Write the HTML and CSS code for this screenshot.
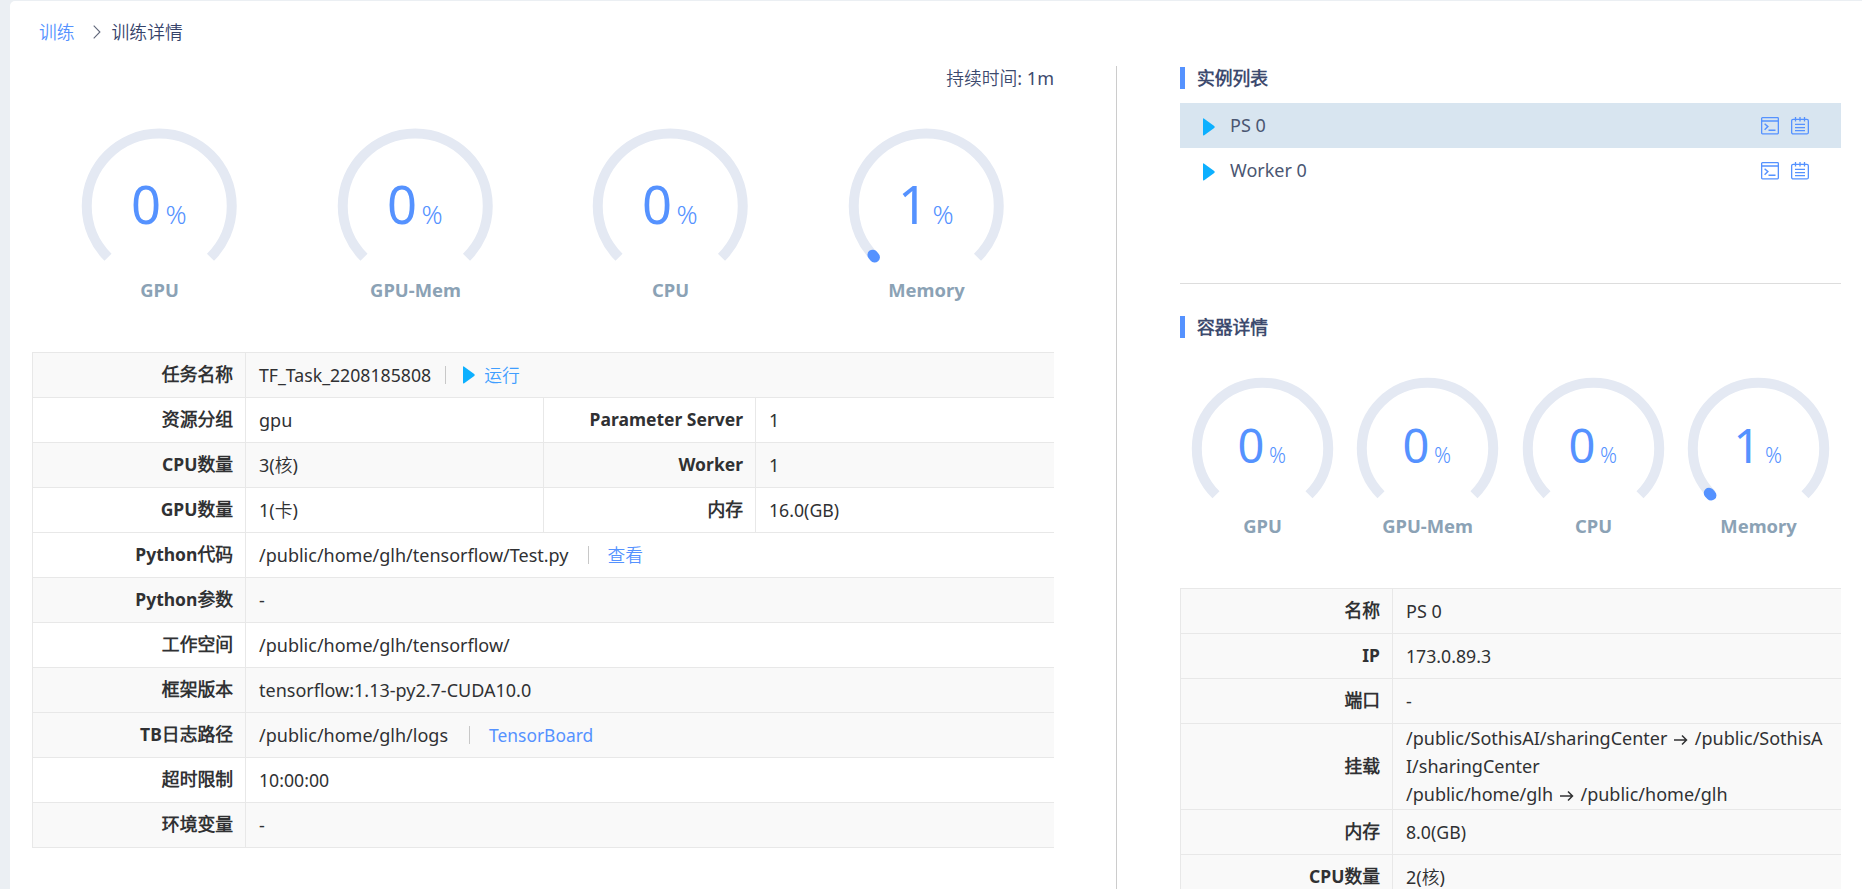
FILE: index.html
```html
<!DOCTYPE html>
<html lang="zh-CN">
<head>
<meta charset="utf-8">
<title>训练详情</title>
<link rel="stylesheet" href="styles.css">
</head>
<body>
<svg class="defs" width="0" height="0" aria-hidden="true">
  <symbol id="play" viewBox="0 0 12 18"><path d="M0 1.2Q0-.3 1.2.8L11.2 8q1 1 0 2L1.2 17.2Q0 18.200 0 16.800Z" fill="#0db0ff"/></symbol>
  <symbol id="term" viewBox="0 0 18 18"><g fill="none" stroke="#5592ff" stroke-width="1.300"><rect x=".65" y=".65" width="16.700" height="16.200" rx=".8"/><path d="M.6 4h16.800"/><path d="M3.600 6.800 6.900 9.600 3.600 12.800M7.500 13.200h7" stroke-width="1.400"/></g></symbol>
  <symbol id="note" viewBox="0 0 18 18"><g fill="none" stroke="#5592ff" stroke-width="1.300"><rect x=".65" y="2.300" width="16.700" height="14.600" rx="1.500"/><path d="M4.500 0v4.500M9 0v4.500M13.500 0v4.500M4 7.400h10M4 10.600h10M4 13.700h10"/></g></symbol>
  <symbol id="ring" viewBox="0 0 256 190"><path d="M76 142.300A72.500 72.500 0 1 1 178.500 142.300" fill="none" stroke="#e4e9f3" stroke-width="10"/></symbol>
  <symbol id="ring-s" viewBox="0 0 166 180"><path d="M36 134.800A65.700 65.700 0 1 1 129 134.800" fill="none" stroke="#e4e9f3" stroke-width="10"/></symbol>
</svg>
<div class="page">
  <nav class="crumbs">
    <a class="link">训练</a>
    <svg class="chev" width="8" height="14" viewBox="0 0 8 14"><path d="M.7.7 6.900 7 .7 13.300" fill="none" stroke="#60677a" stroke-width="1.100"/></svg>
    <span>训练详情</span>
  </nav>
  <div class="columns">
    <section class="left">
      <div class="duration">持续时间<span class="en">: 1m</span></div>
      <div class="gauges">
        <svg class="gauge" viewBox="0 0 255.500 190"><use href="#ring" width="256" height="190"/><text class="num" x="99" y="109">0</text><text class="pct" x="133.500" y="109">%</text><text class="name" x="127.500" y="182">GPU</text></svg>
        <svg class="gauge" viewBox="0 0 255.500 190"><use href="#ring" width="256" height="190"/><text class="num" x="99" y="109">0</text><text class="pct" x="133.500" y="109">%</text><text class="name" x="127.500" y="182">GPU-Mem</text></svg>
        <svg class="gauge" viewBox="0 0 255.500 190"><use href="#ring" width="256" height="190"/><text class="num" x="99" y="109">0</text><text class="pct" x="133.500" y="109">%</text><text class="name" x="127.500" y="182">CPU</text></svg>
        <svg class="gauge" viewBox="0 0 255.500 190"><use href="#ring" width="256" height="190"/><path class="dot" d="M75.700 142.300L73.700 139.900"/><text class="num" x="99" y="109">1</text><text class="pct" x="133.500" y="109">%</text><text class="name" x="127.500" y="182">Memory</text></svg>
      </div>
      <div class="info">
        <div class="row alt"><div class="label">任务名称</div><div class="val"><span class="en digits">TF_Task_2208185808</span><i class="sep near"></i><svg class="play run" width="12" height="18"><use href="#play"/></svg><span class="running">运行</span></div></div>
        <div class="row"><div class="label">资源分组</div><div class="val half"><span class="en">gpu</span></div><div class="label second"><span class="en">Parameter Server</span></div><div class="val"><span class="en">1</span></div></div>
        <div class="row alt"><div class="label"><span class="en">CPU</span>数量</div><div class="val half"><span class="en">3(</span>核<span class="en">)</span></div><div class="label second"><span class="en">Worker</span></div><div class="val"><span class="en">1</span></div></div>
        <div class="row"><div class="label"><span class="en">GPU</span>数量</div><div class="val half"><span class="en">1(</span>卡<span class="en">)</span></div><div class="label second">内存</div><div class="val"><span class="en digits">16.0(GB)</span></div></div>
        <div class="row"><div class="label"><span class="en">Python</span>代码</div><div class="val"><span class="en">/public/home/glh/tensorflow/Test.py</span><i class="sep"></i><a class="link">查看</a></div></div>
        <div class="row alt"><div class="label"><span class="en">Python</span>参数</div><div class="val"><span class="en">-</span></div></div>
        <div class="row"><div class="label">工作空间</div><div class="val"><span class="en">/public/home/glh/tensorflow/</span></div></div>
        <div class="row alt"><div class="label">框架版本</div><div class="val"><span class="en">tensorflow:1.13-py2.7-CUDA10.0</span></div></div>
        <div class="row alt"><div class="label"><span class="en">TB</span>日志路径</div><div class="val"><span class="en">/public/home/glh/logs</span><i class="sep board"></i><a class="link en tb">TensorBoard</a></div></div>
        <div class="row"><div class="label">超时限制</div><div class="val"><span class="en digits">10:00:00</span></div></div>
        <div class="row alt last"><div class="label">环境变量</div><div class="val"><span class="en">-</span></div></div>
      </div>
    </section>
    <aside class="right">
      <h2 class="title">实例列表</h2>
      <div class="list">
        <div class="item active"><svg class="play" width="12" height="18"><use href="#play"/></svg><span class="en">PS 0</span><span class="tools"><svg width="18" height="18"><use href="#term"/></svg><svg width="18" height="18"><use href="#note"/></svg></span></div>
        <div class="item"><svg class="play" width="12" height="18"><use href="#play"/></svg><span class="en">Worker 0</span><span class="tools"><svg width="18" height="18"><use href="#term"/></svg><svg width="18" height="18"><use href="#note"/></svg></span></div>
      </div>
      <h2 class="title">容器详情</h2>
      <div class="gauges small">
        <svg class="gauge" viewBox="0 0 165.250 180"><use href="#ring-s" width="166" height="180"/><text class="num" x="57.500" y="103">0</text><text class="pct" x="89" y="103">%</text><text class="name" x="82.600" y="173">GPU</text></svg>
        <svg class="gauge" viewBox="0 0 165.250 180"><use href="#ring-s" width="166" height="180"/><text class="num" x="57.500" y="103">0</text><text class="pct" x="89" y="103">%</text><text class="name" x="82.600" y="173">GPU-Mem</text></svg>
        <svg class="gauge" viewBox="0 0 165.250 180"><use href="#ring-s" width="166" height="180"/><text class="num" x="57.500" y="103">0</text><text class="pct" x="89" y="103">%</text><text class="name" x="82.600" y="173">CPU</text></svg>
        <svg class="gauge" viewBox="0 0 165.250 180"><use href="#ring-s" width="166" height="180"/><path class="dot" d="M35.200 135.300L33 133"/><text class="num" x="57.500" y="103">1</text><text class="pct" x="89" y="103">%</text><text class="name" x="82.600" y="173">Memory</text></svg>
      </div>
      <div class="info">
        <div class="row alt"><div class="label">名称</div><div class="val"><span class="en">PS 0</span></div></div>
        <div class="row alt"><div class="label"><span class="en">IP</span></div><div class="val"><span class="en digits">173.0.89.3</span></div></div>
        <div class="row alt"><div class="label">端口</div><div class="val"><span class="en">-</span></div></div>
        <div class="row alt mount"><div class="label">挂载</div><div class="val"><span class="en">/public/SothisAI/sharingCenter <svg class="arrow" width="14" height="12" viewBox="0 0 14 12"><path d="M0 6h12.500M8 1.500 12.500 6 8 10.500" fill="none" stroke="#303133" stroke-width="1.500"/></svg> /public/SothisA<br>I/sharingCenter<br>/public/home/glh <svg class="arrow" width="14" height="12" viewBox="0 0 14 12"><path d="M0 6h12.500M8 1.500 12.500 6 8 10.500" fill="none" stroke="#303133" stroke-width="1.500"/></svg> /public/home/glh</span></div></div>
        <div class="row alt"><div class="label">内存</div><div class="val"><span class="en digits">8.0(GB)</span></div></div>
        <div class="row alt"><div class="label"><span class="en">CPU</span>数量</div><div class="val"><span class="en">2(</span>核<span class="en">)</span></div></div>
      </div>
    </aside>
  </div>
</div>
</body>
</html>
```
FILE: styles.css
```css
* { box-sizing: border-box; }
body {
  margin: 0;
  height: 889px;
  overflow: hidden;
  background: #ebeff3;
  font: 350 17.8px/28px "Noto Sans", "Noto Sans CJK SC DemiLight", "Noto Sans CJK SC", sans-serif;
  color: #303133;
}
.defs { display: block; height: 0; }
.en { font-size: 18px; font-weight: 400; }
.digits { font-size: 17.7px; }
.label .en { font-size: 17.5px; font-weight: 700; }
.page {
  margin: 1px 0 0 10px;
  height: 888px;
  background: #fff;
  border-top-left-radius: 5px;
  overflow: hidden;
}
.crumbs {
  display: flex;
  align-items: center;
  height: 65px;
  padding: 0 0 4px 29px;
  color: #35436a;
}
.link { color: #5592ff; }
.chev { margin: 0 11px 0 18px; }
.columns { display: flex; height: 823px; }
.left {
  width: 1107px;
  padding: 0 62px 0 22px;
  border-right: 1px solid #ccc;
}
.duration {
  height: 49px;
  line-height: 24px;
  text-align: right;
  color: #3d4a6e;
}
.gauges { display: flex; height: 237px; }
.gauge { display: block; flex: 1; height: 190px; min-width: 0; }
.num { font-size: 52.5px; font-weight: 400; fill: #5592ff; }
.pct { font-size: 26px; font-weight: 350; fill: #5592ff; }
.name { font-size: 18.4px; font-weight: 700; fill: #8ba2b5; text-anchor: middle; }
.dot { fill: none; stroke: #5592ff; stroke-width: 10.5; stroke-linecap: round; }
.small .gauge { height: 180px; }
.small .num { font-size: 47px; }
.small .pct { font-size: 21px; }

.info { border-left: 1px solid #e8e8e8; }
.row { display: flex; height: 45px; border-top: 1px solid #e8e8e8; }
.row.alt { background: #f9f9f9; }
.row.last { height: 46px; border-bottom: 1px solid #e8e8e8; }
.label {
  width: 213px;
  padding-right: 12px;
  border-right: 1px solid #e8e8e8;
  line-height: 42px;
  text-align: right;
  font-weight: 700;
}
.label.second { width: 212px; }
.val {
  display: flex;
  align-items: center;
  padding-left: 13px;
}
.val.half { width: 298px; border-right: 1px solid #e8e8e8; }
.sep { width: 1px; height: 18px; margin: 0 18px 0 20px; background: #c8c8c8; }
.sep.near { margin: 0 17px 0 14px; }
.sep.board { margin: 0 19px 0 21px; }
.tb { font-size: 17.4px; }
.play { display: block; flex: none; }
.run { margin-right: 9px; }
.running { color: #409eff; }

.right { width: 745px; padding: 0 21px 0 63px; }
.title {
  display: flex;
  align-items: center;
  height: 22px;
  margin: 1px 0 0;
  padding-left: 12px;
  border-left: 5px solid #5592ff;
  font-size: 17.8px;
  font-weight: 700;
  color: #3d4a6e;
}
.list {
  height: 181px;
  margin: 14px 0 32px;
  border-bottom: 1px solid #ddd;
}
.item {
  display: flex;
  align-items: center;
  height: 45px;
  padding: 0 32px 0 23px;
  color: #4a5672;
}
.item.active { background: #d8e5f0; }
.item .play { margin: 3px 15px 0 0; }
.item .en { margin-top: -2px; }
.tools { display: flex; gap: 12px; margin: 1px 0 0 auto; }
.gauges.small { margin-top: 22px; height: 228px; }
.right .label { width: 212px; }
.mount { height: 86px; }
.mount .label { padding-top: 21px; }
.mount .val { padding-bottom: 2px; white-space: nowrap; }
.arrow { margin: 0 2px; vertical-align: -1px; }
```
